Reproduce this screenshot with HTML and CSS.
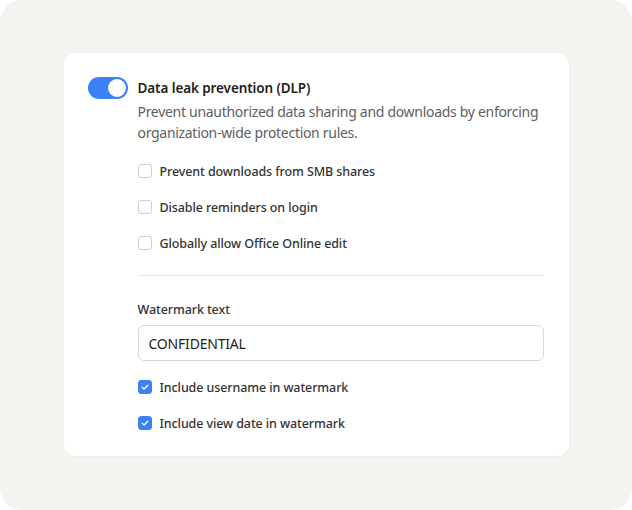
FILE: index.html
```html
<!DOCTYPE html>
<html>
<head>
<meta charset="utf-8">
<link rel="stylesheet" href="styles.css">
</head>
<body>
<div class="frame">
  <div class="card">
    <div class="head">
      <span class="toggle"><span class="knob"></span></span>
      <div class="head-text">
        <div class="title">Data leak prevention (DLP)</div>
        <div class="desc">Prevent unauthorized data sharing and downloads by enforcing organization-wide protection rules.</div>
      </div>
    </div>
    <div class="body">
      <label class="check"><span class="box"></span>Prevent downloads from SMB shares</label>
      <label class="check"><span class="box"></span>Disable reminders on login</label>
      <label class="check"><span class="box"></span>Globally allow Office Online edit</label>
      <div class="divider"></div>
      <div class="field-label">Watermark text</div>
      <div class="input">CONFIDENTIAL</div>
      <label class="check"><span class="box on"><svg viewBox="0 0 14 14" width="14" height="14"><path d="M4.2 7.2 L6.1 9 L9.8 5.2" fill="none" stroke="#fff" stroke-width="1.4" stroke-linecap="round" stroke-linejoin="round"/></svg></span>Include username in watermark</label>
      <label class="check"><span class="box on"><svg viewBox="0 0 14 14" width="14" height="14"><path d="M4.2 7.2 L6.1 9 L9.8 5.2" fill="none" stroke="#fff" stroke-width="1.4" stroke-linecap="round" stroke-linejoin="round"/></svg></span>Include view date in watermark</label>
    </div>
  </div>
</div>
</body>
</html>
```
FILE: styles.css
```css
* { box-sizing: border-box; }
html, body { margin: 0; padding: 0; background: #ffffff; }
body { font-family: "Noto Sans", "Open Sans", sans-serif; }
.frame {
  width: 632px; height: 510px;
  background: #f4f3ef;
  border-radius: 22px;
  display: flex; align-items: center; justify-content: center;
  padding-bottom: 1px;
}
.card {
  width: 505px;
  background: #fff;
  border-radius: 12px;
  box-shadow: 0 1px 3px rgba(0,0,0,0.04);
  padding: 24px 25px 15px 24px;
}
.head { display: flex; gap: 10px; align-items: flex-start; }
.toggle {
  flex: none;
  width: 40px; height: 22px; border-radius: 11px;
  background: #3b82f6;
  position: relative;
}
.knob {
  position: absolute; right: 2px; top: 2px;
  width: 18px; height: 18px; border-radius: 50%;
  background: #fff;
}
.head-text { flex: 1; }
.title { font-size: 13.5px; font-weight: 600; letter-spacing: -0.1px; color: #1e1e1e; line-height: 22px; }
.desc { font-size: 14px; letter-spacing: -0.3px; color: #606060; line-height: 21px; margin-top: 2px; }
.body { padding-left: 50px; margin-top: 10px; }
.check {
  display: flex; align-items: center; gap: 8px;
  font-size: 12.5px; font-weight: 500; letter-spacing: -0.1px; color: #333;
  height: 36px;
}
.box {
  width: 14px; height: 14px; border-radius: 3px;
  border: 1px solid #cfcfcf; background: #fff; flex: none;
  display: flex;
}
.box.on { background: #3b82f6; border-color: #3b82f6; }
.box.on svg { margin: -1px; }
.divider { height: 1px; background: #e6e6e6; margin: 14px 0 25px; }
.field-label { font-size: 12.5px; font-weight: 500; letter-spacing: -0.1px; color: #333; line-height: 18px; margin-bottom: 6px; }
.input {
  height: 36px; border: 1px solid #d9d9d9; border-radius: 6px;
  padding: 0 10px; display: flex; align-items: center;
  font-size: 14px; letter-spacing: -0.2px; color: #1e1e1e;
  margin-bottom: 8px;
}
```
